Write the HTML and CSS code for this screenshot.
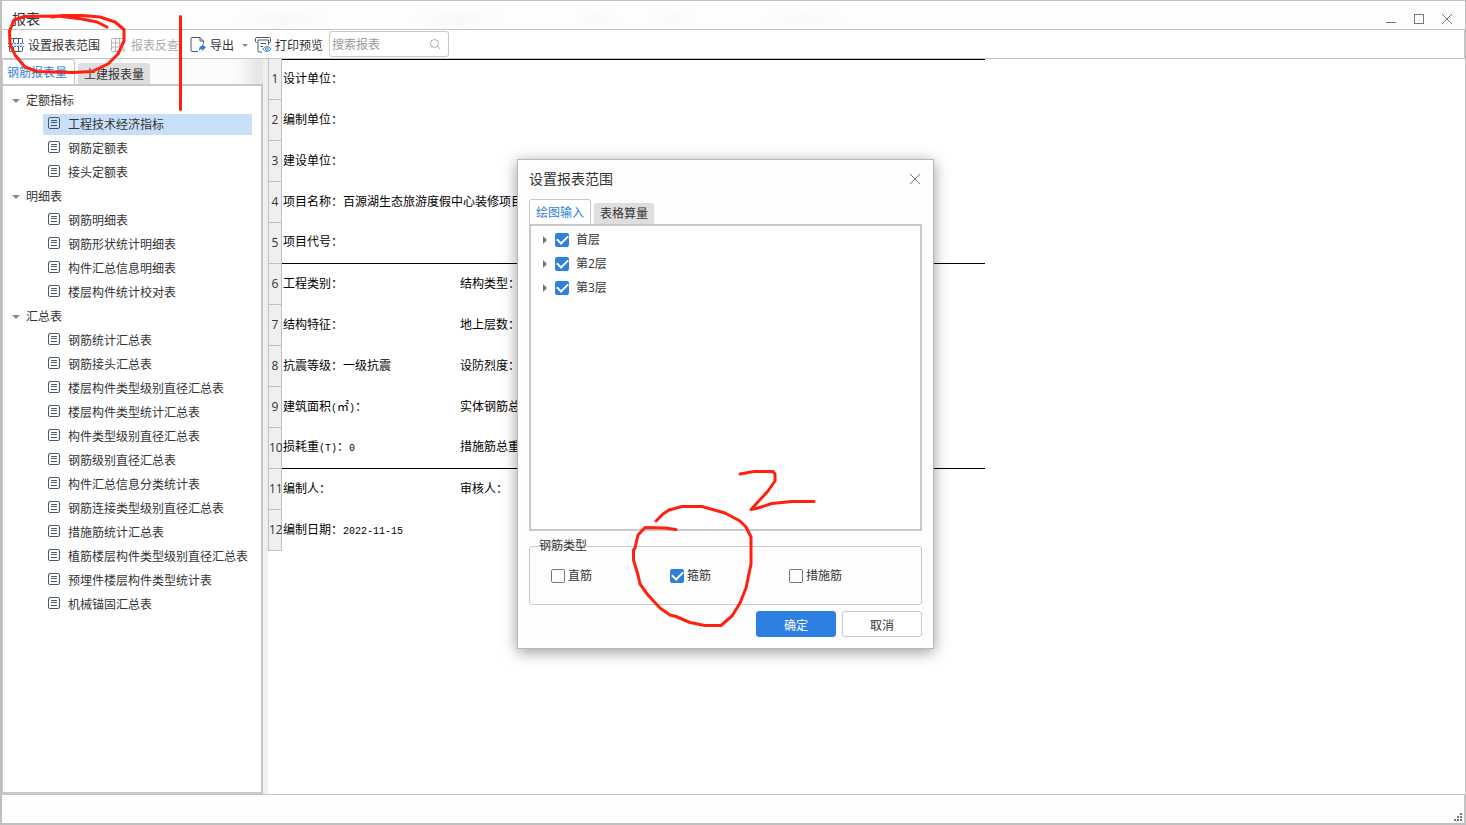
FILE: index.html
```html
<!DOCTYPE html>
<html lang="zh-CN">
<head>
<meta charset="utf-8">
<title>报表</title>
<link rel="stylesheet" href="styles.css">
</head>
<body>
<svg class="defs" aria-hidden="true">
  <symbol id="doc" viewBox="0 0 12 12"><rect x=".5" y=".5" width="11" height="11" rx="1.5"/><path d="M3 3.500h6M3 5.500h6M3 8.500h6"/></symbol>
</svg>
<div class="window">
  <header class="titlebar">
    <h1>报表</h1>
    <div class="controls">
      <button type="button" aria-label="最小化"><svg viewBox="0 0 12 12"><path d="M1 9.500h10"/></svg></button>
      <button type="button" aria-label="最大化"><svg viewBox="0 0 12 12"><rect x="1.5" y="1.5" width="9" height="9"/></svg></button>
      <button type="button" aria-label="关闭"><svg viewBox="0 0 12 12"><path d="M1 1l10 10M11 1L1 11"/></svg></button>
    </div>
  </header>
  <div class="toolbar">
    <button type="button" class="tool range">
      <svg viewBox="0 0 16 16"><path class="ink" d="M1.500 6V2.500q0-1 1-1h11q1 0 1 1V6M5.500 1.500V6M10.500 1.500V6M1.500 10v3.500q0 1 1 1h11q1 0 1-1V10M5.500 10v4.500M10.500 10v4.500"/><path class="band" d="M1 6h14v4H1z"/><path class="blue dash" d="M0 6.500h16M0 9.500h16"/></svg>
      设置报表范围</button>
    <button type="button" class="tool check" disabled>
      <svg viewBox="0 0 16 16"><path class="pale" d="M8 14.500H2.500q-1 0-1-1v-11q0-1 1-1h11V8M1.500 6h12M1.500 10H9M5.500 1.500v13M9.500 1.500V10M10 10l4 4.500M14 10v4.500"/></svg>
      报表反查</button>
    <button type="button" class="tool export">
      <svg viewBox="0 0 16 16"><path class="ink" d="M8 14.500H2q-1 0-1-1v-12q0-1 1-1h8l3.500 3.500V7M10 .5V4h3.500"/><path class="bluefill" d="M9 14q0-5 3-5V7l4 3.500-4 3.500v-2q-2 0-3 2z"/></svg>
      导出<i class="caret"></i></button>
    <button type="button" class="tool print">
      <svg viewBox="0 0 16 16"><path class="ink" d="M2 5.500H1.500q-1 0-1-1v-3q0-1 1-1h13q1 0 1 1v3q0 1-1 1H14M3 3h10.500v5M3 3v11q0 1 1 1h3M5.500 6.500H11M5.500 9.500H8"/><path class="blue" d="M7.500 12q4.500-5 8.500 0-4 5-8.500 0z"/><circle class="blue" cx="11.800" cy="12" r="1.300"/></svg>
      打印预览</button>
    <div class="search">
      <input type="text" placeholder="搜索报表" aria-label="搜索报表">
      <svg viewBox="0 0 12 12"><circle cx="5.500" cy="5.500" r="4"/><path d="M8.500 8.500L11 11"/></svg>
    </div>
  </div>
  <main class="main">
    <aside class="sidebar">
      <nav class="tabs">
        <button type="button" class="tab active">钢筋报表量</button>
        <button type="button" class="tab">土建报表量</button>
      </nav>
      <div class="tree">
        <h2>定额指标</h2>
        <ul>
          <li class="selected"><svg><use href="#doc"/></svg>工程技术经济指标</li>
          <li><svg><use href="#doc"/></svg>钢筋定额表</li>
          <li><svg><use href="#doc"/></svg>接头定额表</li>
        </ul>
        <h2>明细表</h2>
        <ul>
          <li><svg><use href="#doc"/></svg>钢筋明细表</li>
          <li><svg><use href="#doc"/></svg>钢筋形状统计明细表</li>
          <li><svg><use href="#doc"/></svg>构件汇总信息明细表</li>
          <li><svg><use href="#doc"/></svg>楼层构件统计校对表</li>
        </ul>
        <h2>汇总表</h2>
        <ul>
          <li><svg><use href="#doc"/></svg>钢筋统计汇总表</li>
          <li><svg><use href="#doc"/></svg>钢筋接头汇总表</li>
          <li><svg><use href="#doc"/></svg>楼层构件类型级别直径汇总表</li>
          <li><svg><use href="#doc"/></svg>楼层构件类型统计汇总表</li>
          <li><svg><use href="#doc"/></svg>构件类型级别直径汇总表</li>
          <li><svg><use href="#doc"/></svg>钢筋级别直径汇总表</li>
          <li><svg><use href="#doc"/></svg>构件汇总信息分类统计表</li>
          <li><svg><use href="#doc"/></svg>钢筋连接类型级别直径汇总表</li>
          <li><svg><use href="#doc"/></svg>措施筋统计汇总表</li>
          <li><svg><use href="#doc"/></svg>植筋楼层构件类型级别直径汇总表</li>
          <li><svg><use href="#doc"/></svg>预埋件楼层构件类型统计表</li>
          <li><svg><use href="#doc"/></svg>机械锚固汇总表</li>
        </ul>
      </div>
    </aside>
    <section class="report">
      <table>
        <tbody>
          <tr class="rule-top"><th scope="row">1</th><td colspan="2">设计单位：</td></tr>
          <tr><th scope="row">2</th><td colspan="2">编制单位：</td></tr>
          <tr><th scope="row">3</th><td colspan="2">建设单位：</td></tr>
          <tr><th scope="row">4</th><td colspan="2">项目名称：百源湖生态旅游度假中心装修项目</td></tr>
          <tr class="rule"><th scope="row">5</th><td colspan="2">项目代号：</td></tr>
          <tr><th scope="row">6</th><td class="first">工程类别：</td><td>结构类型：</td></tr>
          <tr><th scope="row">7</th><td>结构特征：</td><td>地上层数：</td></tr>
          <tr><th scope="row">8</th><td>抗震等级：一级抗震</td><td>设防烈度：</td></tr>
          <tr><th scope="row">9</th><td>建筑面积<span class="mono">(</span>㎡<span class="mono">)</span>：</td><td>实体钢筋总</td></tr>
          <tr class="rule"><th scope="row">10</th><td>损耗重<span class="mono">(T)</span>：<span class="mono">0</span></td><td>措施筋总重</td></tr>
          <tr><th scope="row">11</th><td>编制人：</td><td>审核人：</td></tr>
          <tr><th scope="row">12</th><td colspan="2">编制日期：<span class="mono">2022-11-15</span></td></tr>
        </tbody>
      </table>
    </section>
  </main>
  <footer class="status">
    <svg viewBox="0 0 8 8"><path d="M6 0h2v2H6zM3 3h2v2H3zM6 3h2v2H6zM0 6h2v2H0zM3 6h2v2H3zM6 6h2v2H6z"/></svg>
  </footer>
</div>

<div class="dialog" role="dialog" aria-labelledby="dialog-title">
  <div class="dialog-head">
    <h2 id="dialog-title">设置报表范围</h2>
    <button type="button" aria-label="关闭"><svg viewBox="0 0 12 12"><path d="M1 1l10 10M11 1L1 11"/></svg></button>
  </div>
  <nav class="tabs">
    <button type="button" class="tab active">绘图输入</button>
    <button type="button" class="tab">表格算量</button>
  </nav>
  <div class="floors">
    <label><i class="arrow"></i><input type="checkbox" checked>首层</label>
    <label><i class="arrow"></i><input type="checkbox" checked>第2层</label>
    <label><i class="arrow"></i><input type="checkbox" checked>第3层</label>
  </div>
  <fieldset>
    <legend>钢筋类型</legend>
    <label><input type="checkbox">直筋</label>
    <label><input type="checkbox" checked>箍筋</label>
    <label><input type="checkbox">措施筋</label>
  </fieldset>
  <div class="actions">
    <button type="button" class="primary">确定</button>
    <button type="button">取消</button>
  </div>
</div>

<svg class="marks" width="860" height="640" viewBox="0 0 860 640" aria-hidden="true">
  <path d="M52 17L63 15.500H82L100 17L115 22L124 29.500V41L118 54L108 64L92 71.500L73 72.500L37 71.500L25 67L15 55L10 44L9.500 31L14 20L24 16.500L58 16L82 19L97 22L107 27"/>
  <path d="M180.500 16.500V109.500"/>
  <path d="M740 474L754 471.500H773L775 474V481L768 491L751 509.500L758 508L772 503.500L792 501.500H814"/>
  <path d="M676 529.500L665 528L645 527.500L638 535L635 548L633.500 550V560L638 575L640 584L648 595L660 608L670 615L676 616.500L690 622.500L705 625.500H721L732 616L740 603L746 588L751 564V537L746 527L740 521L725 513L702 506.500H682L669 510L663 514L656 521"/>
</svg>
</body>
</html>
```
FILE: styles.css
```css
* { box-sizing: border-box; }

body {
  margin: 0;
  font: 12px/24px "Open Sans", "Noto Sans CJK SC", sans-serif;
  color: #333;
}

h1, h2, ul { margin: 0; padding: 0; font-weight: normal; list-style: none; }

button, input { font: inherit; color: inherit; }

button { margin: 0; padding: 0; border: 0; background: none; white-space: nowrap; }

svg { display: block; flex: none; fill: none; }

.defs { position: absolute; width: 0; height: 0; }

.window {
  display: flex;
  flex-direction: column;
  height: 100vh;
  border: solid #bfbfbf;
  border-width: 1px 1px 2px 2px;
  background: #fefefe;
}

/* Title bar */
.titlebar {
  display: flex;
  justify-content: space-between;
  align-items: center;
  height: 28px;
  padding: 8px 12px 0 10px;
  background:
    radial-gradient(ellipse 46px 12px at 281px 19px, #f8f8f8, transparent),
    radial-gradient(ellipse 46px 12px at 455px 19px, #f8f8f8, transparent),
    radial-gradient(ellipse 22px 12px at 595px 19px, #f9f9f9, transparent),
    radial-gradient(ellipse 22px 12px at 670px 19px, #f9f9f9, transparent),
    radial-gradient(ellipse 40px 12px at 800px 19px, #f9f9f9, transparent),
    #fdfdfd;
}

.titlebar h1 { font-size: 14px; line-height: 20px; }

.controls { display: flex; gap: 16px; }

.controls svg, .dialog-head svg { width: 12px; height: 12px; stroke: #777; }

/* Toolbar */
.toolbar {
  display: flex;
  align-items: center;
  height: 30px;
  padding-left: 6px;
  border: 1px solid #c3c4c8;
  border-left: 0;
  background: #fff;
}

.tool { display: flex; align-items: center; gap: 4px; height: 26px; padding-top: 3px; }
.tool svg { width: 16px; height: 16px; margin-bottom: 2px; }
.range { margin-right: 10px; }
.check { gap: 5px; margin-right: 11px; color: #aaa; }
.export { margin-right: 7px; }
.print { margin-right: 6px; }

.ink { stroke: #4b5468; }
.pale { stroke: #b4b4b4; }
.blue { stroke: #2d7fe0; }
.band { fill: #cfe4fb; }
.bluefill { fill: #2d7fe0; }
.dash { stroke-dasharray: 2 1; }

.caret {
  margin-left: 4px;
  border: solid transparent;
  border-width: 3px 3px 0;
  border-top-color: #888;
}

.search {
  display: flex;
  align-items: center;
  width: 120px;
  height: 26px;
  padding: 0 7px 0 2px;
  border: 1px solid #c8c8c8;
  border-radius: 3px;
}

.search input { flex: 1; min-width: 0; padding: 2px 0 0; border: 0; outline: 0; background: none; }
.search input::placeholder { color: #999; }
.search svg { width: 12px; height: 12px; stroke: #aaa; }

/* Tabs */
.tabs { display: flex; align-items: flex-end; gap: 3px; height: 25px; }

.tab {
  height: 21px;
  padding: 0 6px;
  border-radius: 3px 3px 0 0;
  background: #dedede;
  line-height: 21px;
}

.tab.active {
  height: 25px;
  border: 1px solid #c8c8cb;
  border-bottom: 0;
  background: #fff;
  color: #2d7fe0;
  line-height: 26px;
}

/* Side tree */
.main { display: flex; flex: 1; min-height: 0; background: #fff; }

.sidebar {
  display: flex;
  flex-direction: column;
  width: 266px;
  border-right: 5px solid #efefef;
}

.sidebar .tabs { background: linear-gradient(90deg, #fbfbfb 234px, #e6e6e6 256px); }
.sidebar .tab { line-height: 23px; }
.sidebar .tab.active { padding: 0 7px 0 4px; line-height: 26px; }

.tree {
  flex: 1;
  padding: 3px 9px 0 0;
  border: 2px solid #c8c8cb;
  border-left-width: 1px;
  background: #fff;
}

.tree h2 { display: flex; align-items: center; gap: 6px; padding-left: 9px; font-size: 12px; }

.tree h2::before {
  content: "";
  border: solid transparent;
  border-width: 4px 4px 0;
  border-top-color: #888;
}

.tree li {
  display: flex;
  align-items: center;
  gap: 8px;
  height: 21px;
  margin: 1px 0 3px 40px;
  padding-left: 5px;
  white-space: nowrap;
}

.tree li:last-child { margin-bottom: 2px; }

.tree li svg { width: 12px; height: 12px; margin-bottom: 3px; stroke: #4b5468; }
.tree .selected { background: #c8dff8; }

/* Report table */
.report { flex: 1; min-width: 0; }

table { width: 717px; border-collapse: separate; border-spacing: 0; table-layout: auto; }

tr { height: 41px; }

th {
  width: 14px;
  min-width: 14px;
  max-width: 14px;
  padding: 0;
  border: solid #c0c0c0;
  border-width: 0 1px 1px;
  background: #efefef;
  font-weight: normal;
}

td { padding: 0 0 2px 1px; color: #000; text-align: left; white-space: nowrap; }
td.first { width: 177px; }
.rule td { border-bottom: 1px solid #000; }
.rule-top td { border-top: 1px solid #000; }
.mono { font: 10px/12px "Liberation Mono", monospace; }

/* Status bar */
.status {
  display: flex;
  align-items: flex-end;
  justify-content: flex-end;
  height: 29px;
  padding: 0 2px 2px 0;
  border: solid #c3c4c8;
  border-width: 1px 1px 0 0;
}

.status svg { width: 8px; height: 8px; fill: #777; }

/* Dialog */
.dialog {
  position: absolute;
  left: 517px;
  top: 159px;
  width: 417px;
  padding: 8px 11px 11px;
  border: 1px solid #b8b8b8;
  background: #fdfdfd;
  box-shadow: 0 3px 14px rgba(0, 0, 0, .4);
}

.dialog-head { display: flex; align-items: center; justify-content: space-between; height: 22px; margin-bottom: 9px; }
.dialog-head h2 { font-size: 14px; }
.dialog-head button { padding-right: 1px; }

.dialog .tab.active { border-radius: 3px 3px 0 0; }

.floors {
  display: flex;
  flex-direction: column;
  height: 307px;
  padding: 2px 12px;
  border: 2px solid #c8c8cb;
  background: #fff;
}

.dialog label { display: flex; align-items: center; }
.floors label { gap: 7px; }

.arrow {
  margin-right: 1px;
  border: solid transparent;
  border-width: 4px 0 4px 4px;
  border-left-color: #777;
}

input[type="checkbox"] {
  appearance: none;
  width: 14px;
  height: 14px;
  margin: 0;
  border: 1px solid #777;
  border-radius: 2px;
  background: #fff;
}

input[type="checkbox"]:checked {
  display: grid;
  place-items: center;
  border-color: #2d7fe0;
  background: #2d7fe0;
}

input[type="checkbox"]:checked::before {
  content: "";
  width: 9px;
  height: 5px;
  margin-bottom: 3px;
  border: solid #fff;
  border-width: 0 0 2px 2px;
  rotate: -45deg;
}

fieldset {
  position: relative;
  display: grid;
  grid-template-columns: repeat(3, 119px);
  align-items: center;
  height: 59px;
  margin: 15px 0 6px;
  padding: 0 0 0 21px;
  border: 1px solid #c8c8c8;
  border-radius: 3px;
}

legend { position: absolute; left: 9px; top: -13px; padding: 0; }
fieldset label { gap: 3px; }

.actions { display: flex; justify-content: flex-end; gap: 6px; }

.actions button {
  width: 80px;
  height: 26px;
  padding-top: 2px;
  border: 1px solid #c8c8c8;
  border-radius: 3px;
  background: #fff;
}

.actions .primary { border-color: #2d7fe0; background: #2d7fe0; color: #fff; }

/* Hand-drawn annotations */
.marks {
  position: absolute;
  left: 0;
  top: 0;
  stroke: #ff2010;
  stroke-width: 3;
  stroke-linecap: round;
  stroke-linejoin: round;
  pointer-events: none;
}
```
